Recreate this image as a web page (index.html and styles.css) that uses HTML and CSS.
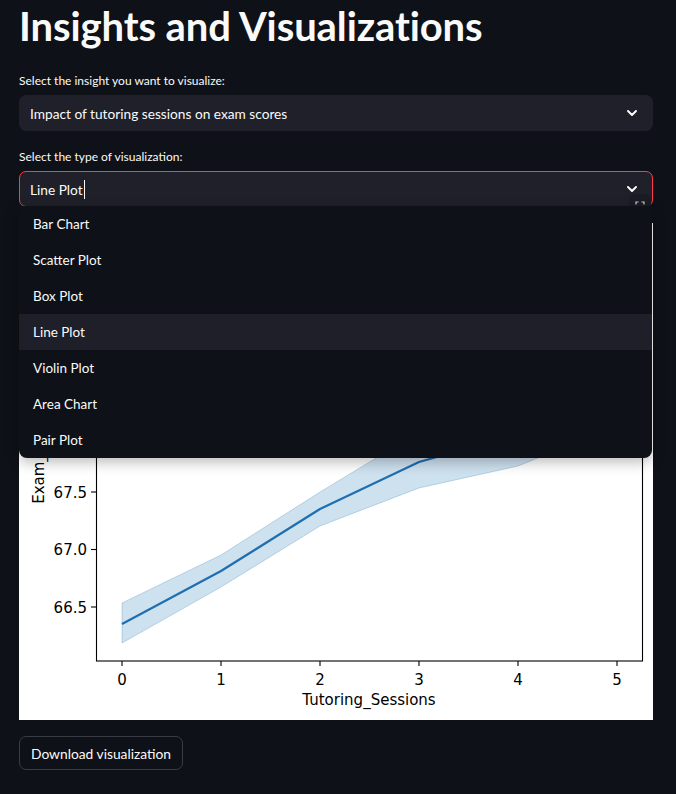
FILE: index.html
```html
<!DOCTYPE html>
<html lang="en">
<head>
<meta charset="utf-8">
<title>Insights and Visualizations</title>
<link rel="stylesheet" href="styles.css">
</head>
<body>
<main class="main">
  <h1 class="title">Insights and Visualizations</h1>

  <div class="field">
    <label class="field-label">Select the insight you want to visualize:</label>
    <div class="select">
      <span class="select-value">Impact of tutoring sessions on exam scores</span>
      <svg class="chevron" width="12" height="8" viewBox="0 0 12 8"><path d="M2 2 L6 6 L10 2" fill="none" stroke="#fafafa" stroke-width="2" stroke-linecap="round" stroke-linejoin="round"/></svg>
    </div>
  </div>

  <div class="field field-open">
    <label class="field-label">Select the type of visualization:</label>
    <div class="select select-focus">
      <span class="select-value">Line Plot<span class="caret"></span></span>
      <svg class="chevron" width="12" height="8" viewBox="0 0 12 8"><path d="M2 2 L6 6 L10 2" fill="none" stroke="#fafafa" stroke-width="2" stroke-linecap="round" stroke-linejoin="round"/></svg>
    </div>
    <ul class="menu">
      <li class="menu-item">Bar Chart</li>
      <li class="menu-item">Scatter Plot</li>
      <li class="menu-item">Box Plot</li>
      <li class="menu-item menu-item-active">Line Plot</li>
      <li class="menu-item">Violin Plot</li>
      <li class="menu-item">Area Chart</li>
      <li class="menu-item">Pair Plot</li>
    </ul>
  </div>

  <div class="figure">
    <button class="fullscreen" aria-label="Fullscreen">
      <svg width="10" height="10" viewBox="0 0 10 10"><path d="M1 3.5V1h2.5M6.5 1H9v2.5M9 6.5V9H6.5M3.5 9H1V6.5" fill="none" stroke="#c9cad0" stroke-width="1.2"/></svg>
    </button>
    <svg class="chart" width="634" height="497" viewBox="0 0 634 497">
      <rect x="0" y="0" width="634" height="497" fill="#ffffff"/>
      <polygon points="103,380 202,332 301,269 400,209 499,177 598,131 598,203 499,243 400,265 301,303 202,364 103,420" fill="#1f77b4" fill-opacity="0.22" stroke="#1f77b4" stroke-opacity="0.25" stroke-width="1"/>
      <polyline points="103,401 202,348 301,286 400,239 499,211 598,188" fill="none" stroke="#1f6fb0" stroke-width="2.2" stroke-linejoin="round"/>
      <rect x="77.5" y="32.5" width="546" height="405.5" fill="none" stroke="#000" stroke-width="1.1"/>
      <g stroke="#000" stroke-width="1.1">
        <line x1="72" y1="384" x2="77" y2="384"/>
        <line x1="72" y1="326.5" x2="77" y2="326.5"/>
        <line x1="72" y1="269" x2="77" y2="269"/>
        <line x1="72" y1="211.5" x2="77" y2="211.5"/>
        <line x1="72" y1="154" x2="77" y2="154"/>
        <line x1="72" y1="96.5" x2="77" y2="96.5"/>
      </g>
      <g class="chart-text" text-anchor="end">
        <text x="68" y="389.5">66.5</text>
        <text x="68" y="332">67.0</text>
        <text x="68" y="274.5">67.5</text>
      </g>
      <g stroke="#000" stroke-width="1.1">
        <line x1="103" y1="438" x2="103" y2="443"/>
        <line x1="202" y1="438" x2="202" y2="443"/>
        <line x1="301" y1="438" x2="301" y2="443"/>
        <line x1="400" y1="438" x2="400" y2="443"/>
        <line x1="499" y1="438" x2="499" y2="443"/>
        <line x1="598" y1="438" x2="598" y2="443"/>
      </g>
      <g class="chart-text" text-anchor="middle">
        <text x="103" y="462">0</text>
        <text x="202" y="462">1</text>
        <text x="301" y="462">2</text>
        <text x="400" y="462">3</text>
        <text x="499" y="462">4</text>
        <text x="598" y="462">5</text>
        <text x="350" y="482">Tutoring_Sessions</text>
      </g>
      <text class="chart-text" transform="translate(25,235) rotate(-90)" text-anchor="middle">Exam_Score</text>
    </svg>
  </div>

  <div class="actions">
    <button class="btn">Download visualization</button>
  </div>
</main>
</body>
</html>
```

FILE: styles.css
```css
* { box-sizing: border-box; }

html, body {
  margin: 0;
  padding: 0;
  background: #0e1117;
}

body {
  color: #fafafa;
  font-family: Lato, "Open Sans", sans-serif;
  width: 676px;
  height: 794px;
  overflow: hidden;
}

.main {
  display: flex;
  flex-direction: column;
  gap: 16px;
  padding: 0 23px 0 19px;
}

.title {
  margin: 0;
  height: 55px;
  padding-top: 4px;
  font-size: 40px;
  line-height: 44px;
  font-weight: 700;
  letter-spacing: -0.1px;
  color: #fafafa;
}

.field {
  display: flex;
  flex-direction: column;
}

.field-open {
  position: relative;
}

.field-label {
  display: block;
  height: 24px;
  line-height: 20px;
  font-size: 12px;
  color: #fafafa;
}

.select {
  height: 36px;
  display: flex;
  align-items: center;
  justify-content: space-between;
  padding: 0 14px 0 10px;
  background: #1f2029;
  border: 1px solid #1f2029;
  border-radius: 7px;
  font-size: 13.7px;
}

.select-focus {
  border-color: #ff3b47;
}

.select-value {
  display: flex;
  align-items: center;
}

.caret {
  display: inline-block;
  width: 1px;
  height: 19px;
  margin-left: 1px;
  background: #fafafa;
}

.chevron {
  display: block;
}

.menu {
  position: absolute;
  z-index: 10;
  left: 0;
  top: 59px;
  width: 633px;
  margin: 0;
  padding: 0;
  list-style: none;
  background: #0e1117;
  border-radius: 0 0 8px 8px;
  box-shadow: 0 4px 14px rgba(0, 0, 0, 0.28);
  overflow: hidden;
}

.menu-item {
  height: 36px;
  line-height: 36px;
  padding-left: 14px;
  font-size: 13.5px;
  color: #fafafa;
}

.menu-item-active {
  background: #1e1f28;
}

.figure {
  position: relative;
  height: 497px;
}

.chart {
  display: block;
}

.chart-text {
  font-family: "DejaVu Sans", sans-serif;
  font-size: 15px;
  fill: #000;
}

.fullscreen {
  position: absolute;
  z-index: 3;
  top: -29px;
  right: 2px;
  width: 22px;
  height: 24px;
  padding: 0;
  display: flex;
  align-items: center;
  justify-content: center;
  background: #1a1c23;
  border: none;
  border-radius: 6px;
}

.actions {
  display: flex;
}

.btn {
  height: 34px;
  padding: 0 11px;
  font-family: inherit;
  font-size: 13.8px;
  color: #fafafa;
  background: #0e1117;
  border: 1px solid #3a3c44;
  border-radius: 7px;
}
```
